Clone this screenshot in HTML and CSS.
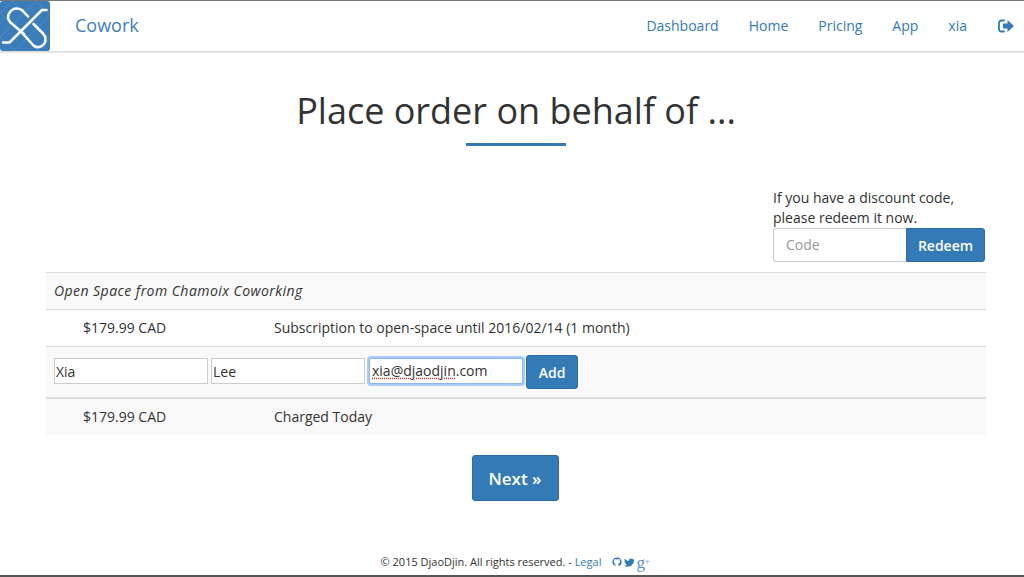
FILE: index.html
```html
<!DOCTYPE html>
<html lang="en">
<head>
<meta charset="utf-8">
<title>Cowork</title>
<link rel="stylesheet" href="styles.css">
</head>
<body>
<header class="navbar">
  <a class="logo" href="#">
    <svg viewBox="0 0 50 50" width="50" height="50">
      <rect width="50" height="50" rx="3" fill="#3b7cba"/>
      <g stroke="#6d9fcf" stroke-width="0.7" fill="none" opacity="0.6">
        <path d="M0 12L38 50M0 36L14 50M12 0L50 38M36 0L50 14M0 12L12 0M0 36L36 0M14 50L50 14M38 50L50 38"/>
      </g>
      <path d="M3 41.500H9.500L42 9H46.500" stroke="#fff" stroke-width="2.500" fill="none" stroke-linecap="round" stroke-linejoin="round"/>
      <g stroke="#fff" stroke-width="2.500" fill="none" stroke-linecap="round" stroke-linejoin="round">
        <path d="M24 33L10.500 21.500C5 16 10 7.500 17 7.500C19.500 7.500 21.500 8.500 23 10L28 15.500"/>
        <path d="M21 30.500L33 44C37.500 48.500 45.500 45 45.500 38.500C45.500 36 44.500 34 43 32.500L33.500 23"/>
      </g>
    </svg>
  </a>
  <a class="brand" href="#">Cowork</a>
  <nav class="nav">
    <a href="#">Dashboard</a>
    <a href="#">Home</a>
    <a href="#">Pricing</a>
    <a href="#">App</a>
    <a href="#">xia</a>
    <a href="#" class="signout" aria-label="Sign out">
      <svg viewBox="0 0 16 14" width="16" height="14"><path d="M6 1.500H3.500C2.100 1.500 1 2.600 1 4V10C1 11.400 2.100 12.500 3.500 12.500H6" fill="none" stroke="#337ab7" stroke-width="1.800" stroke-linecap="round"/><path d="M9.500 1L16 7L9.500 13V9.500H5V4.500H9.500Z" fill="#337ab7"/></svg>
    </a>
  </nav>
</header>

<main class="content">
  <h1 class="title">Place order on behalf of ...</h1>
  <div class="rule"></div>

  <div class="coupon">
    <p class="coupon-text">If you have a discount code,<br>please redeem it now.</p>
    <form class="coupon-form">
      <input class="coupon-input" type="text" placeholder="Code">
      <button class="btn coupon-btn" type="button">Redeem</button>
    </form>
  </div>

  <table class="order">
    <colgroup><col class="col-amount"><col></colgroup>
    <tr class="striped"><td colspan="2" class="plan">Open Space from Chamoix Coworking</td></tr>
    <tr><td class="amount">$179.99 CAD</td><td>Subscription to open-space until 2016/02/14 (1 month)</td></tr>
    <tr class="striped">
      <td colspan="2" class="person-cell">
        <form class="person">
          <input class="field" type="text" value="Xia">
          <input class="field" type="text" value="Lee">
          <span class="field field-focus"><span class="misspelt">xia@djaodjin</span>.com</span>
          <button class="btn add-btn" type="button">Add</button>
        </form>
      </td>
    </tr>
    <tr class="striped total"><td class="amount">$179.99 CAD</td><td>Charged Today</td></tr>
  </table>

  <div class="actions"><button class="btn next-btn" type="button">Next »</button></div>
</main>

<footer class="footer">
  <span>© 2015 DjaoDjin. All rights reserved. - <a href="#">Legal</a></span>
  <span class="social">
    <svg viewBox="0 0 12 12" width="10" height="10"><path d="M6 .5A5.500 5.500 0 0 0 4.200 11.200V9.300C2.700 9.600 2.400 8.600 2.400 8.600 2.100 8 1.800 7.800 1.800 7.800 1.300 7.500 1.900 7.500 1.900 7.500 2.500 7.500 2.800 8.100 2.800 8.100 3.300 8.900 4 8.700 4.300 8.500 4.300 8.200 4.500 7.900 4.700 7.800 3.300 7.600 2.300 7 2.300 5.300 2.300 4.700 2.500 4.300 2.800 3.900 2.700 3.800 2.600 3.200 2.900 2.500 2.900 2.500 3.400 2.400 4.500 3A5 5 0 0 1 7.500 3C8.600 2.400 9.100 2.500 9.100 2.500 9.400 3.200 9.300 3.800 9.200 3.900 9.500 4.300 9.700 4.700 9.700 5.300 9.700 7 8.700 7.600 7.300 7.800 7.600 8 7.800 8.400 7.800 8.900V11.200A5.500 5.500 0 0 0 6 .5Z" fill="#337ab7"/></svg>
    <svg viewBox="0 0 12 10" width="10" height="9"><path d="M12 1.300C11.500 1.500 11 1.600 10.600 1.700 11.100 1.400 11.500 .9 11.700 .3 11.200 .6 10.600 .8 10.100 .9 9.600 .4 9 .1 8.300 .1 6.700 .1 5.500 1.600 5.900 3.200 3.800 3.100 2 2.100.8.600.2 1.700.5 3 1.600 3.800 1.200 3.800.8 3.700.5 3.500.5 4.700 1.300 5.700 2.500 6 2.100 6.100 1.800 6.100 1.400 6 1.700 7 2.600 7.700 3.700 7.700 2.600 8.500 1.300 8.900 0 8.800 4.900 11.900 12 8.600 12 2.500 12 2.200 11.700 1.700 12 1.300Z" fill="#337ab7"/></svg>
    <span class="gplus">g<sup class="plus">+</sup></span>
  </span>
</footer>
</body>
</html>
```

FILE: styles.css
```css
* { box-sizing: border-box; }

html, body { height: 100%; }

body {
  margin: 0;
  height: 577px;
  overflow: hidden;
  display: flex;
  flex-direction: column;
  font-family: "Open Sans", sans-serif;
  font-size: 14px;
  line-height: 20px;
  color: #333;
  background: #fff;
  border-top: 1px solid #777;
  border-bottom: 2px solid #555;
}

a { color: #337ab7; text-decoration: none; }

.navbar {
  display: flex;
  align-items: center;
  height: 51px;
  flex: none;
  border-bottom: 1px solid #ddd;
  box-shadow: 0 1px 1px rgba(0,0,0,.08);
}

.logo { display: block; width: 50px; height: 50px; }
.logo svg { display: block; }

.brand {
  margin-left: 25px;
  font-size: 18px;
  font-weight: 400;
  color: #3b80c4;
  position: relative;
  top: -1px;
}

.nav {
  margin-left: auto;
  display: flex;
  align-items: center;
  gap: 30px;
  padding-right: 10px;
  font-size: 14px;
}

.nav a { color: #337ab7; }
.signout { display: flex; margin-left: 1px; }

.content { flex: 1; display: flex; flex-direction: column; align-items: center; padding-left: 8px; }

.title {
  margin: 36px 0 0;
  font-size: 36px;
  line-height: 46px;
  font-weight: 400;
  text-align: center;
  color: #333;
}

.rule {
  width: 100px;
  height: 3px;
  margin-top: 9px;
  background: #337ab7;
}

.coupon {
  width: 940px;
  align-self: flex-start;
  margin: 42px 0 0 38px;
  display: flex;
  flex-direction: column;
  align-items: flex-end;
  padding-right: 1px;
}

.coupon-text { margin: 0; width: 212px; line-height: 20px; }

.coupon-form { display: flex; width: 212px; height: 34px; }

.coupon-input {
  width: 133px;
  height: 34px;
  padding: 4px 12px 6px;
  border: 1px solid #ccc;
  border-right: 0;
  border-radius: 3px 0 0 3px;
  font: 14px/20px "Open Sans", sans-serif;
  color: #555;
}
.coupon-input::placeholder { color: #999; opacity: 1; }

.btn {
  border: 1px solid #2e6da4;
  background: #337ab7;
  color: #fff;
  font-family: "Open Sans", sans-serif;
  font-weight: 600;
  border-radius: 3px;
  padding: 0;
}

.coupon-btn { width: 79px; height: 34px; font-size: 14px; border-radius: 0 3px 3px 0; }

.order {
  width: 940px;
  align-self: flex-start;
  margin: 10px 0 0 38px;
  border-collapse: collapse;
  table-layout: fixed;
}

.col-amount { width: 220px; }

.order td {
  border-top: 1px solid #ddd;
  padding: 8px;
  height: 37px;
  vertical-align: top;
}

.striped { background: #f9f9f9; }
.plan { font-style: italic; letter-spacing: .45px; }
.amount { padding-left: 37px !important; }

.order td.person-cell { padding: 8px 8px 8px; height: 51px; }

.person { display: flex; align-items: center; gap: 3px; height: 34px; }

.field {
  width: 154px;
  height: 26px;
  margin-top: -2px;
  padding: 1px 1px;
  border: 1px solid #ccc;
  background: #fff;
  font: 14px/22px "Open Sans", sans-serif;
  color: #333;
  border-radius: 0;
  display: block;
}

.field-focus {
  margin-left: 1px;
  padding-left: 2px;
  border: 1px solid #8ab8ee;
  box-shadow: 0 0 0 2px #a9cdf7;
  border-radius: 2px;
}

.misspelt { text-decoration: underline dotted #e03030; text-underline-offset: 2px; }

.add-btn { width: 52px; height: 34px; font-size: 14px; }

.order .total td { border-top: 2px solid #ddd; height: 36px; }

.actions { margin: 20px 2px 0 0; }

.next-btn { width: 87px; height: 46px; font-size: 17px; border-radius: 3px; }

.footer {
  margin-top: auto;
  padding-bottom: 5px;
  display: flex;
  justify-content: center;
  align-items: center;
  gap: 11px;
  font-size: 11px;
  line-height: 16px;
  color: #333;
  position: relative;
  left: 3px;
}

.social { display: flex; align-items: center; gap: 2px; color: #337ab7; }
.gplus { font-family: "Liberation Serif", serif; font-size: 17px; line-height: 11px; color: #5b93c7; }
.plus { font-size: 8px; line-height: 0; vertical-align: 4px; }
```
